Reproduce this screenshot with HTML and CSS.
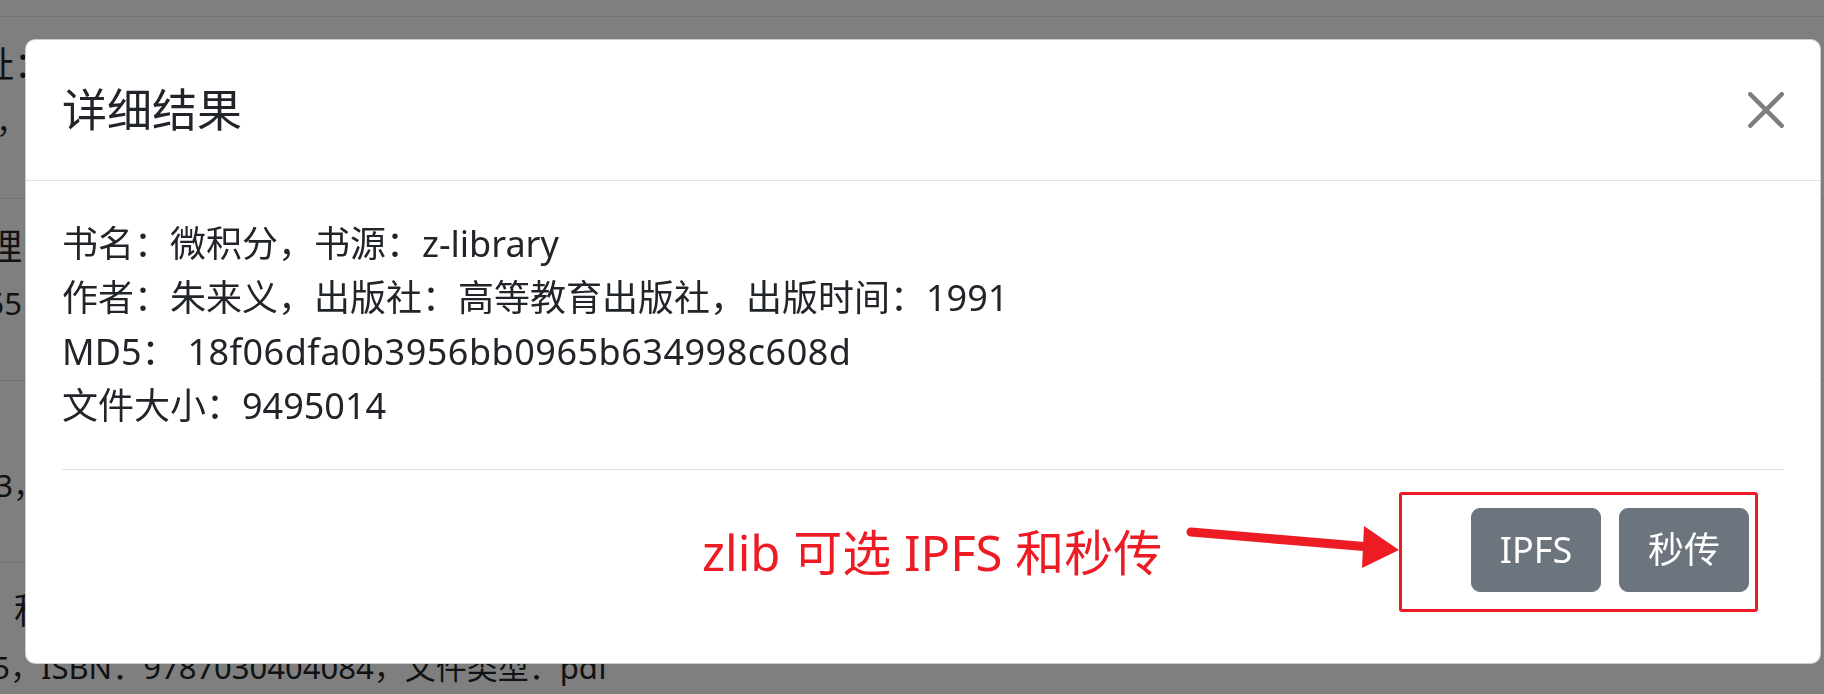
FILE: index.html
```html
<!DOCTYPE html>
<html lang="zh-CN">
<head>
<meta charset="utf-8">
<title>详细结果</title>
<link rel="stylesheet" href="styles.css">
</head>
<body>
<main class="page">
  <ul class="result-list">
    <li class="result-item">
      <div class="item-title title-0">文件下载地址：</div>
      <div class="item-meta meta-0">作者：同济大学数学系，</div>
    </li>
    <li class="result-item">
      <div class="item-title title-1">高等数学原理</div>
      <div class="item-meta meta-1">出版时间：1955，</div>
    </li>
    <li class="result-item">
      <div class="item-title title-2">数学分析</div>
      <div class="item-meta meta-2">出版时间：2013，</div>
    </li>
    <li class="result-item">
      <div class="item-title title-3">积分表</div>
      <div class="item-meta meta-3">出版时间：1995，ISBN：9787030404084，文件类型：pdf</div>
    </li>
  </ul>
</main>

<div class="backdrop"></div>

<div class="modal">
  <div class="modal-dialog">
    <div class="modal-header">
      <h5 class="modal-title">详细结果</h5>
      <button class="btn-close" type="button" aria-label="Close">
        <svg viewBox="0 0 16 16" width="36" height="36" aria-hidden="true"><path d="M.293.293a1 1 0 0 1 1.414 0L8 6.586 14.293.293a1 1 0 1 1 1.414 1.414L9.414 8l6.293 6.293a1 1 0 0 1-1.414 1.414L8 9.414l-6.293 6.293a1 1 0 0 1-1.414-1.414L6.586 8 .293 1.707a1 1 0 0 1 0-1.414z"/></svg>
      </button>
    </div>
    <div class="modal-body">
      <div class="info">
        <div class="info-line">书名：微积分，书源：z-library</div>
        <div class="info-line">作者：朱来义，出版社：高等教育出版社，出版时间：1991</div>
        <div class="info-line">MD5：<span class="hash">&nbsp;18f06dfa0b3956bb0965b634998c608d</span></div>
        <div class="info-line">文件大小：9495014</div>
      </div>
      <div class="actions">
        <button class="btn" type="button">IPFS</button>
        <button class="btn" type="button">秒传</button>
      </div>
    </div>
  </div>
</div>

<div class="annotation">
  <svg class="annotation-marks" width="1824" height="694" viewBox="0 0 1824 694" aria-hidden="true">
    <rect x="1400.5" y="493.5" width="356" height="117" rx="1.5" fill="none" stroke="#ed1c24" stroke-width="3"/>
    <line x1="1191" y1="532" x2="1370" y2="547" stroke="#ed1c24" stroke-width="9" stroke-linecap="round"/>
    <polygon points="1399,550 1364,526 1362,568" fill="#ed1c24"/>
  </svg>
  <div class="annotation-text">zlib 可选 IPFS 和秒传</div>
</div>
</body>
</html>
```

FILE: styles.css
```css
html, body {
  margin: 0;
  padding: 0;
  width: 1824px;
  height: 694px;
  overflow: hidden;
  background: #ffffff;
  font-family: "Noto Sans", "Noto Sans CJK SC", sans-serif;
  color: #212529;
}

/* ---------- page behind the dialog ---------- */
.page {
  padding-top: 16px;
}

.result-list {
  list-style: none;
  margin: 0;
  padding: 0;
}

.result-item {
  box-sizing: border-box;
  height: 182px;
  border-top: 1px solid #dee2e6;
  padding-top: 21px;
  white-space: nowrap;
}

.result-item:last-child {
  height: auto;
}

.item-title {
  font-size: 36px;
  line-height: 54px;
  height: 54px;
}

.item-meta {
  font-size: 31px;
  line-height: 46px;
  height: 46px;
  margin-top: 6px;
}

.title-0 { margin-left: -202px; }
.meta-0  { margin-left: -314px; }
.title-1 { margin-left: -194px; }
.meta-1  { margin-left: -204px; }
.title-2 { margin-left: 40px; }
.meta-2  { margin-left: -213px; }
.title-3 { margin-left: 14px; }
.meta-3  { margin-left: -216px; }

/* ---------- backdrop + dialog ---------- */
.backdrop {
  position: fixed;
  inset: 0;
  background: rgba(0, 0, 0, 0.5);
}

.modal {
  position: fixed;
  inset: 0;
  padding: 39px 0 0 25px;
}

.modal-dialog {
  box-sizing: border-box;
  width: 1796px;
  background: #ffffff;
  border: 1px solid rgba(0, 0, 0, 0.2);
  border-radius: 10px;
  display: flex;
  flex-direction: column;
}

.modal-header {
  display: flex;
  align-items: center;
  padding: 36px;
  border-bottom: 1px solid #dee2e6;
}

.modal-title {
  margin: 0;
  font-size: 45px;
  font-weight: 400;
  line-height: 67.5px;
  height: 67.5px;
}

.btn-close {
  box-sizing: content-box;
  width: 36px;
  height: 36px;
  padding: 18px;
  margin: -18px -18px -18px auto;
  border: 0;
  background: transparent;
  opacity: 0.5;
  display: flex;
  align-items: center;
  justify-content: center;
}

.btn-close svg {
  display: block;
  fill: #000000;
}

.modal-body {
  padding: 36px;
}

.info {
  margin-bottom: 36px;
  font-size: 36px;
}

.info-line {
  height: 54px;
  line-height: 54px;
  white-space: nowrap;
}

.hash {
  letter-spacing: 0.5px;
}

.actions {
  display: flex;
  justify-content: flex-end;
  gap: 18px;
  border-top: 1px solid #dee2e6;
  padding: 38px 35px 35px;
}

.btn {
  box-sizing: border-box;
  width: 130px;
  height: 84px;
  padding: 0;
  border: 1px solid #6c757d;
  border-radius: 9px;
  background: #6c757d;
  color: #ffffff;
  font-family: "Noto Sans", "Noto Sans CJK SC", sans-serif;
  font-size: 36px;
  line-height: 82px;
  text-align: center;
}

/* ---------- red annotation drawn over the screenshot ---------- */
.annotation {
  position: absolute;
  inset: 0;
  pointer-events: none;
}

.annotation-marks {
  position: absolute;
  left: 0;
  top: 0;
}

.annotation-text {
  position: absolute;
  left: 702px;
  top: 528px;
  font-size: 49px;
  line-height: 48px;
  color: #ed1c24;
  white-space: nowrap;
}
```
